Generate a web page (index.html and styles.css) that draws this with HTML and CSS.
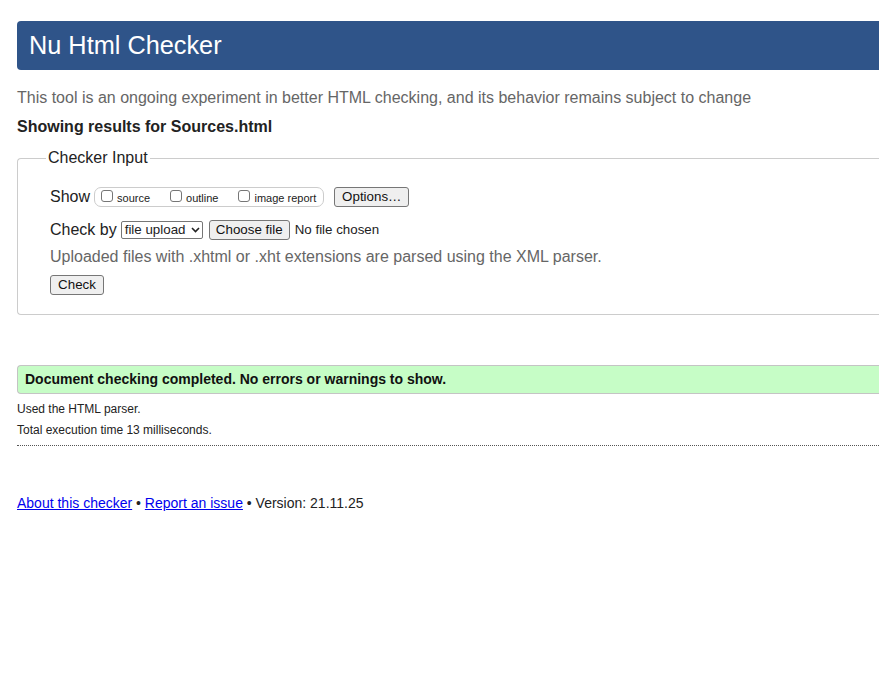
FILE: index.html
```html
<!DOCTYPE html>
<html lang="en">
<head>
<meta charset="utf-8">
<title>Nu Html Checker</title>
<link rel="stylesheet" href="styles.css">
</head>
<body>
<div class="page">
  <header class="banner"><h1 class="title">Nu Html Checker</h1></header>
  <p class="intro">This tool is an ongoing experiment in better HTML checking, and its behavior remains subject to change</p>
  <p class="showing">Showing results for Sources.html</p>
  <form class="checker">
    <fieldset class="inputset">
      <legend class="legend">Checker Input</legend>
      <div class="row row-show">
        <span class="label">Show</span>
        <span class="pill">
          <label class="opt"><input type="checkbox" class="cb"><span class="optlabel">source</span></label>
          <label class="opt"><input type="checkbox" class="cb"><span class="optlabel">outline</span></label>
          <label class="opt"><input type="checkbox" class="cb"><span class="optlabel">image report</span></label>
        </span>
        <button type="button" class="btn btn-options">Options…</button>
      </div>
      <div class="row row-by">
        <span class="label">Check by</span>
        <span class="select">file upload<svg class="chev" width="9" height="6" viewBox="0 0 9 6"><path d="M1 1 L4.5 4.5 L8 1" fill="none" stroke="#222" stroke-width="1.6"/></svg></span>
        <button type="button" class="btn btn-file">Choose file</button>
        <span class="nofile">No file chosen</span>
      </div>
      <p class="note">Uploaded files with .xhtml or .xht extensions are parsed using the XML parser.</p>
      <div class="row row-check">
        <button type="button" class="btn btn-check">Check</button>
      </div>
    </fieldset>
  </form>
  <p class="success">Document checking completed. No errors or warnings to show.</p>
  <p class="details">Used the HTML parser.</p>
  <p class="details details-2">Total execution time 13 milliseconds.</p>
  <hr class="dotted">
  <p class="footer"><a href="#" class="link">About this checker</a> • <a href="#" class="link">Report an issue</a> • Version: 21.11.25</p>
</div>
</body>
</html>
```
FILE: styles.css
```css
html, body {
  margin: 0;
  padding: 0;
  overflow: hidden;
  background: #fff;
}
body {
  font-family: "Liberation Sans", Arial, Helvetica, sans-serif;
  color: #222;
}
.page {
  width: 900px;
  padding: 21px 0 0 17px;
}
.banner {
  height: 49px;
  background: #2f5489;
  border-radius: 4px 0 0 4px;
  display: flex;
  align-items: center;
  padding-left: 12px;
}
.title {
  margin: 0;
  font-size: 25.3px;
  font-weight: normal;
  color: #fff;
  line-height: 1;
}
.intro {
  margin: 19px 0 0 0;
  font-size: 16px;
  line-height: 18px;
  color: #666;
}
.showing {
  margin: 11px 0 0 0;
  font-size: 16px;
  line-height: 18px;
  font-weight: bold;
  color: #222;
}
.checker {
  margin: 13px 0 0 0;
}
.inputset {
  margin: 0;
  border: 1px solid #ccc;
  border-right: none;
  border-radius: 4px 0 0 4px;
  padding: 0 0 19px 32px;
  min-width: 0;
}
.legend {
  margin-left: -4px;
  padding: 0 2px;
  font-size: 16px;
  line-height: 18px;
  color: #222;
}
.row {
  display: flex;
  align-items: center;
  white-space: nowrap;
}
.row-show {
  margin-top: 20px;
  height: 20px;
}
.row-by {
  margin-top: 13px;
  height: 20px;
}
.row-check {
  margin-top: 9px;
}
.label {
  font-size: 16px;
  line-height: 18px;
}
.pill {
  display: flex;
  align-items: center;
  flex: none;
  height: 18px;
  margin-left: 4px;
  padding: 0 7px 0 6px;
  border: 1px solid #ccc;
  border-radius: 7px;
}
.opt {
  display: flex;
  align-items: center;
  flex: none;
  margin-right: 20px;
  white-space: nowrap;
}
.opt:last-child {
  margin-right: 0;
}
.cb {
  appearance: none;
  -webkit-appearance: none;
  flex: none;
  width: 12px;
  height: 12px;
  margin: 0 4px 0 0;
  border: 1px solid #767676;
  border-radius: 3px;
  background: #fff;
  position: relative;
  top: -1px;
}
.optlabel {
  font-size: 11px;
  line-height: 13px;
  position: relative;
  top: 1px;
}
.btn {
  font-family: "Liberation Sans", Arial, Helvetica, sans-serif;
  font-size: 13.33px;
  line-height: 16px;
  color: #111;
  background: #efefef;
  border: 1px solid #767676;
  border-radius: 3px;
  padding: 1px 6px;
  margin: 0;
  height: 20px;
  flex: none;
}
.btn-options {
  margin-left: 10px;
  width: 75px;
  padding: 1px 0;
}
.select {
  display: inline-flex;
  align-items: center;
  flex: none;
  margin-left: 4px;
  height: 16px;
  width: 75px;
  padding: 0 2px 0 3px;
  border: 1px solid #767676;
  border-radius: 2px;
  font-size: 13.33px;
  line-height: 16px;
  justify-content: space-between;
  background: #fff;
}
.chev {
  display: block;
}
.btn-file {
  margin-left: 6px;
  width: 81px;
  padding: 1px 0;
}
.nofile {
  margin-left: 5px;
  font-size: 13.33px;
  line-height: 16px;
}
.note {
  margin: 8px 0 0 0;
  font-size: 16px;
  line-height: 18px;
  color: #666;
}
.btn-check {
  width: 54px;
  height: 20px;
  padding: 1px 0;
}
.success {
  margin: 50px 0 0 0;
  height: 27px;
  line-height: 27px;
  padding-left: 7px;
  background: #c6fdc6;
  border: 1px solid #c4c4c4;
  border-right: none;
  border-radius: 4px 0 0 4px;
  font-size: 14px;
  font-weight: bold;
  color: #111;
}
.details {
  margin: 8px 0 0 0;
  font-size: 12px;
  line-height: 14px;
  color: #222;
}
.details-2 {
  margin-top: 7px;
}
.dotted {
  margin: 8px 0 0 0;
  border: none;
  border-top: 1px dotted #555;
  height: 0;
}
.footer {
  margin: 49px 0 0 0;
  font-size: 14px;
  line-height: 16px;
  color: #222;
}
.link {
  color: #0000ee;
  text-decoration: underline;
}
```
